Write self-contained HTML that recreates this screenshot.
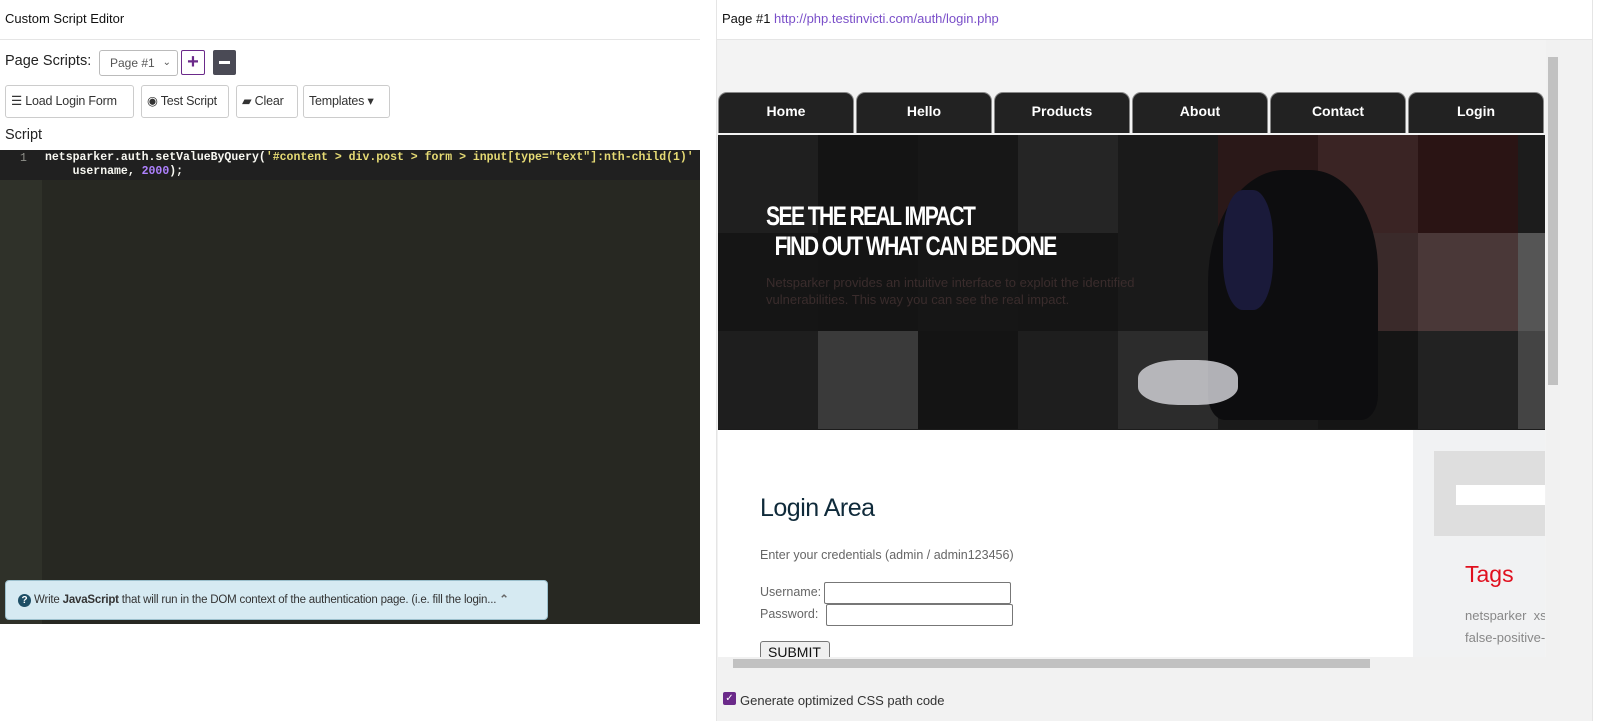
<!DOCTYPE html>
<html><head><meta charset="utf-8"><style>
*{box-sizing:border-box;margin:0;padding:0}
body{width:1600px;height:721px;overflow:hidden;background:#fff;font-family:"Liberation Sans",sans-serif;position:relative}
.abs{position:absolute;white-space:nowrap}
.btn{position:absolute;top:85px;height:33px;border:1px solid #ccc;border-radius:3px;font-size:12.5px;color:#333;line-height:31px;padding:0 5px;background:#fff;white-space:nowrap;overflow:hidden;letter-spacing:-.2px}
.tab{position:absolute;top:92px;height:41px;width:136px;background:#222;border-radius:9px 9px 0 0;color:#fff;font-weight:bold;font-size:14px;text-align:center;line-height:36px;border:1px solid #888;border-bottom:none}
.blk{position:absolute;width:100px;height:98px}
</style></head><body>
<div class="abs" style="left:5px;top:11px;font-size:13px;color:#111">Custom Script Editor</div>
<div class="abs" style="left:0;top:39px;width:700px;height:1px;background:#e5e5e5"></div>
<div class="abs" style="left:5px;top:53px;font-size:14.5px;color:#222">Page Scripts:</div>
<div class="abs" style="left:99px;top:50px;width:79px;height:26px;border:1px solid #bbb;border-radius:3px;font-size:12px;color:#555;line-height:24px;padding-left:10px">Page #1 <span style="position:absolute;right:6px;font-size:10px">&#8964;</span></div>
<div class="abs" style="left:181px;top:50px;width:24px;height:25px;border:1px solid #6b2a8a;border-radius:2px;color:#6b2a8a;font-weight:bold;font-size:20px;text-align:center;line-height:22px">+</div>
<div class="abs" style="left:213px;top:50px;width:23px;height:25px;background:#4a4a55;border-radius:2px"><div class="abs" style="left:6px;top:11px;width:11px;height:3px;background:#fff"></div></div>
<div class="btn" style="left:5px;width:129px">&#9776; Load Login Form</div>
<div class="btn" style="left:141px;width:88px">&#9673; Test Script</div>
<div class="btn" style="left:236px;width:62px">&#9648; Clear</div>
<div class="btn" style="left:303px;width:87px">Templates &#9662;</div>
<div class="abs" style="left:5px;top:127px;font-size:14.5px;color:#222">Script</div>
<div class="abs" style="left:0;top:150px;width:700px;height:474px;background:#272822"></div>
<div class="abs" style="left:0;top:150px;width:42px;height:474px;background:#2f3129"></div>
<div class="abs" style="left:0;top:150px;width:700px;height:30px;background:#202020"></div>
<div class="abs" style="left:20px;top:152px;font-family:'Liberation Mono',monospace;font-size:11.5px;color:#8f908a">1</div>
<div class="abs" style="left:45px;top:151px;width:655px;overflow:hidden;font-family:'Liberation Mono',monospace;font-size:11.5px;color:#f8f8f2;line-height:14px;white-space:pre;font-weight:bold">netsparker.auth.setValueByQuery(<span style="color:#e6db74">'#content &gt; div.post &gt; form &gt; input[type="text"]:nth-child(1)'</span>
    username, <span style="color:#ae81ff">2000</span>);</div>
<div class="abs" style="left:5px;top:580px;width:543px;height:40px;background:#d6eaf2;border:1px solid #9bbfcc;border-radius:4px;font-size:11.5px;color:#333;line-height:38px;padding-left:12px;letter-spacing:-.2px"><span style="display:inline-block;width:13px;height:13px;border-radius:50%;background:#1e4f66;color:#fff;font-size:10px;line-height:13px;text-align:center;font-weight:bold">?</span> Write <b>JavaScript</b> that will run in the DOM context of the authentication page. (i.e. fill the login... <b style="color:#666">&#8963;</b></div>
<div class="abs" style="left:716px;top:0;width:1px;height:721px;background:#e5e5e5"></div>
<div class="abs" style="left:1592px;top:0;width:1px;height:721px;background:#e5e5e5"></div>
<div class="abs" style="left:722px;top:11px;font-size:13px;color:#111">Page #1 <span style="color:#7a4fc9">http://php.testinvicti.com/auth/login.php</span></div>
<div class="abs" style="left:717px;top:39px;width:875px;height:1px;background:#e5e5e5"></div>
<div class="abs" style="left:717px;top:40px;width:875px;height:681px;background:#f2f2f2"></div>
<div class="abs" style="left:718px;top:40px;width:828px;height:617px;background:#f3f3f3"></div>
<div class="tab" style="left:718px">Home</div>
<div class="tab" style="left:856px">Hello</div>
<div class="tab" style="left:994px">Products</div>
<div class="tab" style="left:1132px">About</div>
<div class="tab" style="left:1270px">Contact</div>
<div class="tab" style="left:1408px">Login</div>
<div class="abs" style="left:718px;top:135px;width:827px;height:295px;background:#1c1c1c;overflow:hidden">
<div class="blk" style="left:0;top:0;background:#1f1f1f"></div><div class="blk" style="left:100px;top:0;background:#141414"></div><div class="blk" style="left:200px;top:0;background:#171717"></div><div class="blk" style="left:300px;top:0;background:#252525"></div><div class="blk" style="left:400px;top:0;background:#1a1a1a"></div><div class="blk" style="left:500px;top:0;background:#2a1818"></div><div class="blk" style="left:600px;top:0;background:#3a2424"></div><div class="blk" style="left:700px;top:0;background:#2a1414"></div>
<div class="blk" style="left:0;top:98px;background:#151515"></div><div class="blk" style="left:100px;top:98px;background:#141414"></div><div class="blk" style="left:200px;top:98px;background:#161616"></div><div class="blk" style="left:300px;top:98px;background:#151515"></div><div class="blk" style="left:400px;top:98px;background:#1a1a1a"></div><div class="blk" style="left:500px;top:98px;background:#2a1a1a"></div><div class="blk" style="left:600px;top:98px;background:#3a2a2a"></div><div class="blk" style="left:700px;top:98px;background:#4a3838"></div><div class="blk" style="left:800px;top:98px;background:#555"></div>
<div class="blk" style="left:0;top:196px;background:#1e1e1e"></div><div class="blk" style="left:100px;top:196px;background:#3a3a3a"></div><div class="blk" style="left:200px;top:196px;background:#141414"></div><div class="blk" style="left:300px;top:196px;background:#1e1e1e"></div><div class="blk" style="left:400px;top:196px;background:#2c2c2c"></div><div class="blk" style="left:500px;top:196px;background:#1a1a1a"></div><div class="blk" style="left:600px;top:196px;background:#151515"></div><div class="blk" style="left:700px;top:196px;background:#222"></div><div class="blk" style="left:800px;top:196px;background:#444"></div>
<div class="abs" style="left:490px;top:35px;width:170px;height:250px;background:#0d0d0f;border-radius:45% 40% 10% 10%"></div>
<div class="abs" style="left:505px;top:55px;width:50px;height:120px;background:#1a1a3a;border-radius:40%"></div>
<div class="abs" style="left:420px;top:225px;width:100px;height:45px;background:#cfcfd4;border-radius:40%;opacity:.85"></div>
<div class="abs" style="left:48px;top:66px;color:#fff;font-size:27px;font-weight:bold;letter-spacing:-2px;transform:scaleX(.78);transform-origin:left;line-height:30px">SEE THE REAL IMPACT<br>&nbsp;&nbsp;FIND OUT WHAT CAN BE DONE</div>
<div class="abs" style="left:48px;top:139px;color:#3a2c2c;font-size:13px;line-height:17px">Netsparker provides an intuitive interface to exploit the identified<br>vulnerabilities. This way you can see the real impact.</div>
</div>
<div class="abs" style="left:718px;top:430px;width:695px;height:227px;background:#fff"></div>
<div class="abs" style="left:1413px;top:430px;width:132px;height:227px;background:#f1f2f3;overflow:hidden">
<div class="abs" style="left:21px;top:21px;width:111px;height:85px;background:#dedede"></div>
<div class="abs" style="left:43px;top:55px;width:89px;height:20px;background:#fff"></div>
<div class="abs" style="left:52px;top:131px;font-size:23px;color:#e0101e">Tags</div>
<div class="abs" style="left:52px;top:175px;font-size:13px;color:#888;line-height:22px">netsparker &nbsp;xs<br>false-positive-</div>
</div>
<div class="abs" style="left:760px;top:494px;font-size:25px;color:#0f2a3a;letter-spacing:-.5px">Login Area</div>
<div class="abs" style="left:760px;top:548px;font-size:12.5px;color:#666">Enter your credentials (admin / admin123456)</div>
<div class="abs" style="left:760px;top:585px;font-size:12.5px;color:#666">Username:</div>
<div class="abs" style="left:760px;top:607px;font-size:12.5px;color:#666">Password:</div>
<div class="abs" style="left:824px;top:582px;width:187px;height:22px;border:1px solid #777;border-radius:2px;background:#fff"></div>
<div class="abs" style="left:826px;top:604px;width:187px;height:22px;border:1px solid #777;border-radius:2px;background:#fff"></div>
<div class="abs" style="left:760px;top:641px;width:70px;height:16px;overflow:hidden;border:1px solid #777;border-bottom:none;border-radius:3px 3px 0 0;background:#f0f0f0;font-size:14px;padding:2px 0 0 7px;color:#111">SUBMIT</div>
<div class="abs" style="left:718px;top:657px;width:842px;height:13px;background:#f1f1f1"></div>
<div class="abs" style="left:733px;top:659px;width:637px;height:9px;background:#c1c1c1"></div>
<div class="abs" style="left:1546px;top:40px;width:14px;height:617px;background:#f1f1f1"></div>
<div class="abs" style="left:1548px;top:57px;width:10px;height:328px;background:#c1c1c1"></div>
<div class="abs" style="left:723px;top:692px;width:13px;height:13px;background:#6b2a8a;border-radius:2px;color:#fff;font-size:10px;text-align:center;line-height:13px">&#10003;</div>
<div class="abs" style="left:740px;top:693px;font-size:13px;color:#333">Generate optimized CSS path code</div>
</body></html>
